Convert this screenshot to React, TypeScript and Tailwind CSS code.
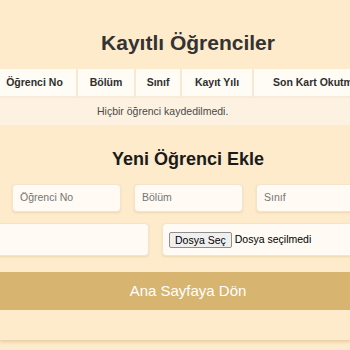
export default function App() {
  const cols = [
    { label: "Öğrenci No", w: "w-[84px]" },
    { label: "Bölüm", w: "w-[58px]" },
    { label: "Sınıf", w: "w-[46px]" },
    { label: "Kayıt Yılı", w: "w-[72px]" },
    { label: "Son Kart Okutma Zamanı", w: "w-[200px]" },
  ];

  return (
    <div className="min-h-[350px] w-[350px] overflow-hidden bg-[#fdebcb] font-['Liberation_Sans',Arial,sans-serif]">
      <div className="w-[350px] bg-[#fdebcb] pt-[29px] pb-[30px] shadow-[0_2px_3px_rgba(190,150,90,0.35)]">
        {/* Kayıtlı öğrenciler */}
        <h1 className="w-[376px] text-center text-[21px] leading-[28px] font-bold text-[#333]">
          Kayıtlı Öğrenciler
        </h1>

        <table className="ml-[-7px] mt-[12px] border-collapse text-[10.5px] table-fixed w-[460px]">
          <thead>
            <tr className="bg-[#fffbf5]">
              {cols.map((c, i) => (
                <th
                  key={c.label}
                  className={`${c.w} h-[28px] px-0 font-bold text-[#2e2e2e] text-center whitespace-nowrap ${i < cols.length - 1 ? "border-r-2 border-[#f6ead6]" : ""}`}
                >
                  {i === cols.length - 1 ? (
                    <span className="block pl-[19px] text-left">{c.label}</span>
                  ) : (
                    c.label
                  )}
                </th>
              ))}
            </tr>
          </thead>
          <tbody>
            <tr className="bg-[#fdf2e1] border-t-2 border-[#f8ecd9]">
              <td colSpan={5} className="h-[28px] pl-[104px] text-left text-[#4a4a4a]">
                Hiçbir öğrenci kaydedilmedi.
              </td>
            </tr>
          </tbody>
        </table>

        {/* Yeni öğrenci formu */}
        <h2 className="mt-[22px] w-[376px] text-center text-[18px] leading-[24px] font-bold text-[#1a1a1a]">
          Yeni Öğrenci Ekle
        </h2>

        <div className="mt-[13px] flex gap-[13px] pl-[12px]">
          {["Öğrenci No", "Bölüm", "Sınıf"].map((p) => (
            <div
              key={p}
              className="flex h-[28px] w-[109px] shrink-0 items-center rounded-[4px] border border-[#f3e4cc] bg-[#fffaf3] pl-[7px] text-[10.5px] text-[#757575] shadow-[0_1px_2px_rgba(200,160,100,0.25)]"
            >
              {p}
            </div>
          ))}
        </div>

        <div className="mt-[11px] ml-[-40px] flex gap-[13px]">
          <div className="h-[33px] w-[189px] shrink-0 rounded-[4px] border border-[#f3e4cc] bg-[#fffaf3] shadow-[0_1px_2px_rgba(200,160,100,0.25)]" />
          <div className="flex h-[33px] w-[260px] shrink-0 items-center gap-[3px] rounded-[4px] border border-[#f3e4cc] bg-[#fffaf3] pl-[6px] text-[10.5px] text-black shadow-[0_1px_2px_rgba(200,160,100,0.25)]">
            <span className="rounded-[2px] border border-[#8f8f8f] bg-[#efefef] px-[5px] leading-[14px]">
              Dosya Seç
            </span>
            <span>Dosya seçilmedi</span>
          </div>
        </div>

        <button className="mt-[16px] h-[38px] w-[376px] bg-[#d7b470] text-center text-[15px] text-white">
          Ana Sayfaya Dön
        </button>
      </div>
    </div>
  );
}
